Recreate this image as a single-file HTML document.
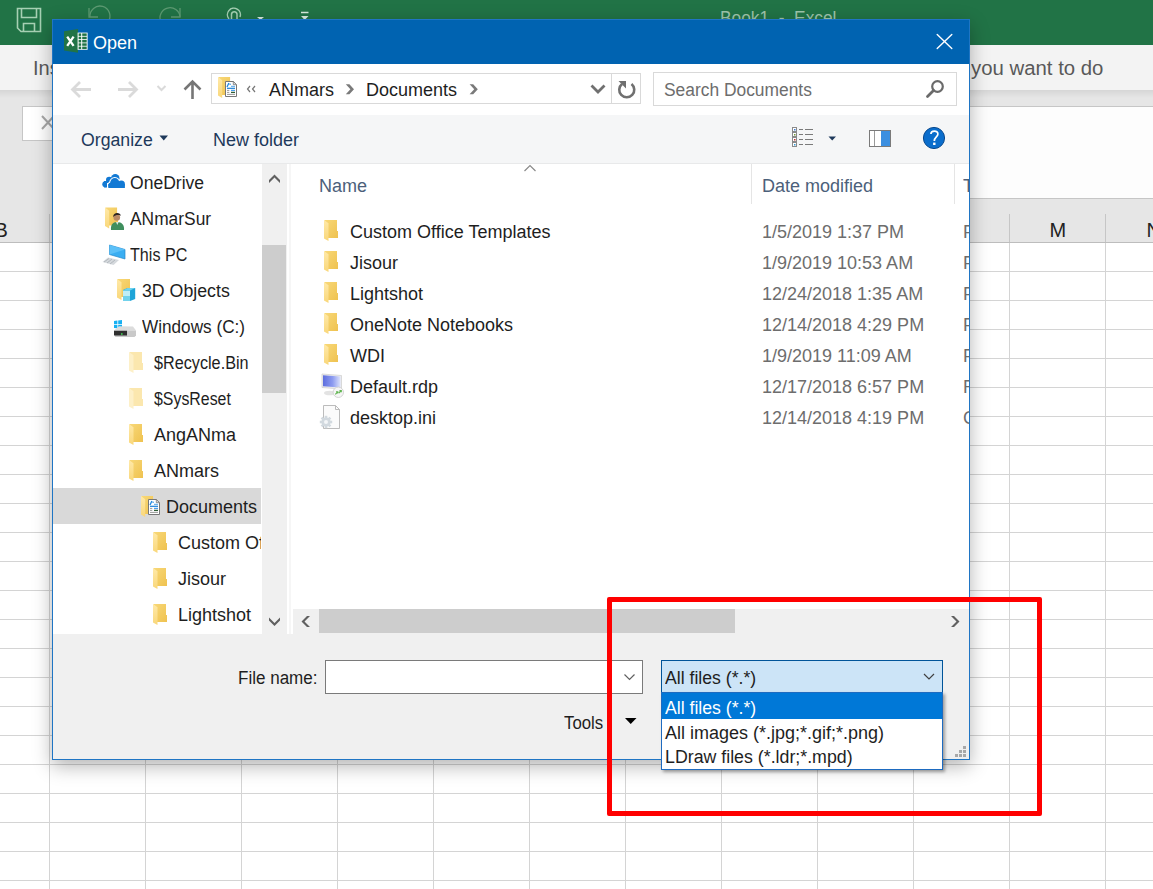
<!DOCTYPE html>
<html><head><meta charset="utf-8">
<style>
*{box-sizing:border-box;margin:0;padding:0}
html,body{width:1153px;height:889px;overflow:hidden;background:#fff}
body{position:relative;font-family:"Liberation Sans",sans-serif;font-size:18px;color:#1e1e1e}
.a{position:absolute}
.t{position:absolute;white-space:nowrap;line-height:1}
svg{position:absolute;overflow:visible}
</style></head><body>

<svg width="0" height="0" style="position:absolute">
<defs>
  <linearGradient id="fb" x1="0" y1="0" x2="1" y2="1"><stop offset="0" stop-color="#f8d878"/><stop offset="1" stop-color="#efc250"/></linearGradient>
  <linearGradient id="ff" x1="0" y1="0" x2="0" y2="1"><stop offset="0" stop-color="#ffe9a8"/><stop offset="1" stop-color="#f9d77a"/></linearGradient>
  
  
  
</defs></svg>
<!-- ============ EXCEL BACKGROUND ============ -->
<div class="a" style="left:0;top:0;width:1153px;height:45px;background:#217346"></div>
<!-- QAT icons -->
<svg style="left:0;top:0" width="320" height="45">
  <g fill="none" stroke="#a6d0b3" stroke-width="1.6">
    <path d="M17.5 8.5 H40.5 V31.5 H21 L17.5 28 Z"/>
    <path d="M21.5 8.5 V17.5 H36.5 V8.5"/>
    <path d="M23.5 31.5 V23.5 H34.5 V31.5"/>
  </g>
  <g fill="none" stroke="#5d9a72" stroke-width="1.3">
    <path d="M90 17 A10 10 0 1 1 108 22"/>
    <path d="M89 8 V17 H98"/>
    <path d="M180 17 A10 10 0 1 0 161 22"/>
    <path d="M180 8 V17 H171"/>
  </g>
  <g fill="none" stroke="#a6d0b3" stroke-width="1.5">
    <path d="M229 19 A6.5 6.5 0 1 1 240 17"/>
    <path d="M231.5 19 V14 A2.8 2.8 0 0 1 237 14 V19"/>
  </g>
  <path d="M257 17 H264 L260.5 20 Z" fill="#d9eadf"/>
  <path d="M301 12.5 H308.5" stroke="#d9eadf" stroke-width="1.5"/>
  <path d="M301 16 H308.5 L304.7 20 Z" fill="#d9eadf"/>
</svg>
<div class="t" style="left:720px;top:8.5px;font-size:18px;color:#9fc4ab;transform:scaleX(0.962);transform-origin:0 0">Book1&nbsp;&nbsp;-&nbsp;&nbsp;Excel</div>

<!-- tab row -->
<div class="a" style="left:0;top:45px;width:1153px;height:45px;background:#f3f3f3"></div>
<div class="t" style="left:33px;top:58px;font-size:20px;color:#595959">Insert</div>
<div class="t" style="left:971px;top:58px;font-size:20px;color:#595959;transform:scaleX(1.018);transform-origin:0 0">you want to do</div>
<!-- ribbon shadow / formula bar -->
<div class="a" style="left:0;top:90px;width:1153px;height:152px;background:#e6e6e6"></div>
<div class="a" style="left:0;top:90px;width:1153px;height:8px;background:linear-gradient(#d6d6d6,#e6e6e6)"></div>
<div class="a" style="left:22px;top:106px;width:40px;height:35px;background:#fff;border:1px solid #c6c6c6"></div>
<svg style="left:0;top:0" width="60" height="150"><path d="M42 116 L54 129 M54 116 L42 129" stroke="#a8a8a8" stroke-width="2"/></svg>
<div class="a" style="left:600px;top:106px;width:553px;height:93px;background:#fdfdfd;border-top:1px solid #c6c6c6;border-bottom:1px solid #c6c6c6"></div>
<!-- column header -->
<div class="a" style="left:0;top:242px;width:1153px;height:1px;background:#bdbdbd"></div>
<div class="a" style="left:49px;top:214px;width:1px;height:28px;background:#c6c6c6"></div>
<div class="a" style="left:1009px;top:214px;width:1px;height:28px;background:#c6c6c6"></div>
<div class="a" style="left:1105px;top:214px;width:1px;height:28px;background:#c6c6c6"></div>
<div class="t" style="left:-5.5px;top:220.3px;font-size:20px;color:#222">B</div>
<div class="t" style="left:1049.5px;top:220.3px;font-size:20px;color:#222">M</div>
<div class="t" style="left:1146.5px;top:220.3px;font-size:20px;color:#222">N</div>
<!-- grid -->
<div class="a" style="left:0;top:243px;width:1153px;height:646px;
background-image:linear-gradient(to right,#d4d4d4 1px,transparent 1px),linear-gradient(to bottom,#d4d4d4 1px,transparent 1px);
background-size:96px 29px,96px 29px;background-position:49px 0,0 28px"></div>

<!-- ============ DIALOG ============ -->
<div class="a" id="dlg" style="left:52px;top:19px;width:918px;height:741px;background:#fff;border:1px solid #1f75c4;box-shadow:0 6px 18px rgba(0,0,0,.3)"></div>
<!-- title bar -->
<div class="a" style="left:53px;top:20px;width:916px;height:44px;background:#0063b1"></div>
<svg style="left:0;top:0" width="120" height="64">
  <path d="M64 31.3 L78 29 V52.7 L64 50.5 Z" fill="#217346"/>
  <rect x="77.6" y="32.6" width="10" height="17.2" fill="#fff"/>
  <rect x="78.6" y="33.4" width="2.6" height="2.5" fill="#217346"/><rect x="82.2" y="33.4" width="4.5" height="2.5" fill="#217346"/><rect x="78.6" y="36.7" width="2.6" height="2.5" fill="#217346"/><rect x="82.2" y="36.7" width="4.5" height="2.5" fill="#217346"/><rect x="78.6" y="40.0" width="2.6" height="2.5" fill="#217346"/><rect x="82.2" y="40.0" width="4.5" height="2.5" fill="#217346"/><rect x="78.6" y="43.3" width="2.6" height="2.5" fill="#217346"/><rect x="82.2" y="43.3" width="4.5" height="2.5" fill="#217346"/><rect x="78.6" y="46.6" width="2.6" height="2.5" fill="#217346"/><rect x="82.2" y="46.6" width="4.5" height="2.5" fill="#217346"/>
  <path d="M67.2 36.6 L73.6 45.9 M73.6 36.6 L67.2 45.9" stroke="#fff" stroke-width="2.3"/>
</svg>
<div class="t" style="left:93px;top:34px;font-size:18px;color:#fff">Open</div>
<svg style="left:0;top:0" width="970" height="64"><path d="M937.2 34.5 L951.8 48.5 M951.8 34.5 L937.2 48.5" stroke="#fff" stroke-width="1.4" stroke-linecap="round"/></svg>


<!-- address row -->
<svg style="left:0;top:0" width="660" height="110">
  <g fill="none" stroke="#dadada" stroke-width="2.8">
    <path d="M73 89.5 H91 M80 82 L72.5 89.5 L80 97"/>
    <path d="M118 89.5 H136 M129 82 L136.5 89.5 L129 97"/>
  </g>
  <path d="M157.5 86 L161.5 90 L165.5 86" fill="none" stroke="#dadada" stroke-width="2"/>
  <path d="M192.5 99 V82 M184.5 89.5 L192.5 81.5 L200.5 89.5" fill="none" stroke="#767676" stroke-width="2.6"/>
</svg>
<div class="a" style="left:211px;top:73px;width:430px;height:31px;border:1px solid #d9d9d9;background:#fff"></div>
<div class="a" style="left:611px;top:74px;width:1px;height:29px;background:#d9d9d9"></div>
<svg style="left:0;top:0" width="660" height="110">
  <!-- documents icon -->
  <g transform="translate(218 77) scale(0.928571 1)"><path d="M0.5 0 H13 V11 H14 V18 H0.5 Z" fill="url(#fb)"/>
    <path d="M0 0 L4.5 3.2 V21 L0 18.5 Z" fill="url(#ff)"/></g>
  <g transform="translate(225 81) scale(1 1)"><path d="M0.5 0.5 H8.3 L11.5 3.7 V15.5 H0.5 Z" fill="#fff" stroke="#777" stroke-width="1"/>
    <path d="M8.3 0.5 V3.7 H11.5 Z" fill="#e6e6e6" stroke="#777" stroke-width="0.8"/>
    <path d="M2 6 L3.9 2" stroke="#1e88e0" stroke-width="1.3"/>
    <circle cx="5.1" cy="3.3" r="0.7" fill="#1e88e0"/>
    <path d="M6 5.3 H10" stroke="#4fa3e8" stroke-width="1"/>
    <path d="M2 7.3 H10" stroke="#1a7fd6" stroke-width="1.2"/>
    <path d="M2 9.4 H4.3 M2 11.4 H4.3 M2 13.4 H10" stroke="#9a9a9a" stroke-width="1"/>
    <path d="M6 9.4 H10" stroke="#4a9ef0" stroke-width="1.2"/>
    <path d="M6 11.4 H10" stroke="#2f5e36" stroke-width="1.3"/></g>
  <path d="M250 86 L247.5 89 L250 92 M255 86 L252.5 89 L255 92" fill="none" stroke="#777" stroke-width="1.2"/>
  <path d="M345.8 84.3 H349.4 L354 89.3 L349.4 94.3 H345.8 L350.4 89.3 Z" fill="#7a7a7a"/>
  <path d="M469.6 84.3 H473.2 L477.8 89.3 L473.2 94.3 H469.6 L474.2 89.3 Z" fill="#7a7a7a"/>
  <path d="M591.5 85.5 L598 92 L604.5 85.5" fill="none" stroke="#707070" stroke-width="2.8"/>
  <path d="M622 84 A7.5 7.5 0 1 0 631.5 84" fill="none" stroke="#707070" stroke-width="2.6"/>
  <path d="M618.5 81 H626 V88.5 Z" fill="#707070"/>
</svg>
<div class="t" style="left:269px;top:80.5px;color:#1e1e1e">ANmars</div>
<div class="t" style="left:366px;top:80.5px;color:#1e1e1e">Documents</div>
<!-- search -->
<div class="a" style="left:653px;top:72px;width:304px;height:34px;border:1px solid #d9d9d9;background:#fff"></div>
<div class="t" style="left:664px;top:81px;color:#6d6d6d;transform:scaleX(0.966);transform-origin:0 0">Search Documents</div>
<svg style="left:0;top:0" width="970" height="110">
  <circle cx="937.5" cy="86.5" r="5.3" fill="none" stroke="#6a6a6a" stroke-width="2.2"/>
  <path d="M933.5 90.5 L927.5 96.5" stroke="#6a6a6a" stroke-width="2.8" stroke-linecap="round"/>
</svg>

<!-- toolbar -->
<div class="a" style="left:53px;top:115px;width:916px;height:49px;background:#f5f6f7;border-bottom:1px solid #e8e9ea"></div>
<div class="t" style="left:81px;top:131px;color:#1e395b;transform:scaleX(0.982);transform-origin:0 0">Organize</div>
<svg style="left:0;top:0" width="970" height="165">
  <path d="M159.5 135.5 H168 L163.75 140.5 Z" fill="#1e395b"/>
  <!-- view icon -->
  <g fill="#fff" stroke="#8a8a8a" stroke-width="1">
    <rect x="792.5" y="127.5" width="4" height="4"/><rect x="792.5" y="132.5" width="4" height="4"/>
    <rect x="792.5" y="137.5" width="4" height="4"/><rect x="792.5" y="142.5" width="4" height="4"/>
  </g>
  <rect x="794" y="129" width="1.5" height="1.5" fill="#3a7bd5"/>
  <rect x="794" y="134" width="1.5" height="1.5" fill="#7a9a3a"/>
  <rect x="794" y="139" width="1.5" height="1.5" fill="#c03030"/>
  <rect x="794" y="144" width="1.5" height="1.5" fill="#3a9ad5"/>
  <path d="M799 129.5 H803 M805 129.5 H813 M799 134.5 H803 M805 134.5 H813 M799 139.5 H803 M805 139.5 H813 M799 144.5 H803 M805 144.5 H813" stroke="#7a7a7a" stroke-width="1"/>
  <path d="M828.5 136.5 H836 L832.2 140.5 Z" fill="#1e395b"/>
  <!-- preview pane -->
  <rect x="869.5" y="130.5" width="21" height="16" fill="#fff" stroke="#7a7a7a" stroke-width="1"/>
  <path d="M874.5 131 V146" stroke="#9a9a9a" stroke-width="1"/>
  <rect x="881" y="131" width="9" height="15" fill="#3c8fe0"/>
  <!-- help -->
  <circle cx="934" cy="138" r="10.6" fill="#0a6dcc" stroke="#0a4a8e" stroke-width="1"/>
  <path d="M930.9 134 C930.9 130.3 937.9 130 937.9 134 C937.9 136.8 934.3 137 934.3 141" fill="none" stroke="#fff" stroke-width="1.7"/>
  <rect x="933.1" y="142.6" width="2.4" height="2.4" fill="#fff"/>
</svg>
<div class="t" style="left:213px;top:131px;color:#1e395b">New folder</div>

<!-- nav pane -->
<div class="a" style="left:262px;top:164px;width:25px;height:470px;background:#f0f0f0"></div>
<div class="a" style="left:262px;top:245px;width:24px;height:148px;background:#cdcdcd"></div>
<div class="a" style="left:289px;top:164px;width:2px;height:470px;background:#f6f6f6"></div>
<svg style="left:0;top:0" width="300" height="640">
  <path d="M269 180 L274.5 174.5 L280 180 V183 L274.5 177.5 L269 183 Z" fill="#606060"/>
  <path d="M269 617.5 L274.5 623 L280 617.5 V620.5 L274.5 626 L269 620.5 Z" fill="#606060"/>
</svg>
<div class="a" style="left:53px;top:488px;width:208px;height:36px;background:#d9d9d9"></div>
<svg style="left:0;top:0" width="262" height="634">
  <!-- OneDrive -->
  <g fill="#1279d4">
    <circle cx="105.3" cy="184.3" r="3"/><circle cx="109.2" cy="180" r="3.2"/><circle cx="115.3" cy="178.2" r="4.2"/>
    <rect x="104" y="181" width="10" height="6.5"/>
  </g>
  <g fill="#fff">
    <circle cx="114.8" cy="182.7" r="5.6"/><circle cx="121.3" cy="184" r="4.6"/><circle cx="111.2" cy="185.2" r="3.8"/>
    <rect x="107" y="183" width="19.5" height="6"/>
  </g>
  <g fill="#1279d4">
    <circle cx="114.8" cy="182.7" r="4.6"/><circle cx="121.3" cy="184" r="3.6"/><circle cx="111.2" cy="185.2" r="2.8"/>
    <rect x="108.3" y="184" width="16.6" height="4"/>
  </g>
  <!-- ANmarSur user folder -->
  <g transform="translate(105 207.5) scale(0.928571 1)"><path d="M0.5 0 H13 V11 H14 V18 H0.5 Z" fill="url(#fb)"/>
    <path d="M0 0 L4.5 3.2 V21 L0 18.5 Z" fill="url(#ff)"/></g>
  <path d="M111 230 C110.5 225 112.5 222 117 222 C122 222 124.5 225 124 230 Z" fill="#3f8f5e"/>
  <path d="M116 222 L117.3 225 L118.6 222 Z" fill="#dfe8e2"/>
  <circle cx="116.8" cy="217.5" r="3.3" fill="#b98a66"/>
  <path d="M113.3 217 C112.8 212.5 120.5 211.5 120.8 216 C119.5 214.5 115.5 214.5 113.3 217Z" fill="#2e2622"/>
  <!-- This PC -->
  <path d="M109.5 245 L125 249.5 V259 L109.5 254.5 Z" fill="#3aaef2" stroke="#2a88c8" stroke-width="0.7"/>
  <path d="M109.5 245 L125 249.5 L109.5 254.5 Z" fill="#5cc0f8"/>
  <path d="M102.5 262 L108 257.5 L119 260 L113.5 265 Z" fill="#d5d9dd"/>
  <path d="M104 262 L109 258.5 M107 263 L112 259 M110 264 L115 260" stroke="#a8aeb4" stroke-width="0.8"/>
  <!-- 3D Objects -->
  <g transform="translate(117 279) scale(1 1)"><path d="M0.5 0 H13 V11 H14 V18 H0.5 Z" fill="url(#fb)"/>
    <path d="M0 0 L4.5 3.2 V21 L0 18.5 Z" fill="url(#ff)"/></g>
  <path d="M123 290 L127.5 288 H135.2 V299 L130 301 H123 Z" fill="#1ea4d8"/>
  <path d="M123 290.5 L130 290.5 V301 H123 Z" fill="#bfeef7"/>
  <path d="M123 290.5 L127.5 288 H135.2 L130 290.5 Z" fill="#6fd3ee"/>
  <path d="M123 296 H130 V301 H123 Z" fill="#3fc0e4" opacity="0.6"/>
  <!-- Windows drive -->
  <g fill="#18b0f2"><path d="M114 321 L117.4 320.6 V324 H114 Z"/><path d="M118.2 320.5 L122 320 V324 H118.2 Z"/><path d="M114 324.8 H117.4 V328.3 L114 328 Z"/><path d="M118.2 324.8 H122 V328.8 L118.2 328.4 Z"/></g>
  <path d="M114 330.5 L119 326.3 L133 326.6 L136 330.5 Z" fill="#dcdcdc"/>
  <path d="M114 330.5 H136 V335.5 L134.5 337 H115.5 L114 335.5 Z" fill="#c9c9c9"/>
  <path d="M114 330.8 H127 V335.6 H114.8 L114 335 Z" fill="#2f2f2f"/>
  <rect x="121" y="333.2" width="1.6" height="1.6" fill="#3fd24f"/>
  <g transform="translate(129 352) scale(1 1)"><path d="M0.5 0 H13 V11 H14 V18 H0.5 Z" fill="#fbe7ae"/>
    <path d="M0 0 L4.5 3.2 V21 L0 18.5 Z" fill="#fdf0c8"/></g>
  <g transform="translate(129 388) scale(1 1)"><path d="M0.5 0 H13 V11 H14 V18 H0.5 Z" fill="#fbe7ae"/>
    <path d="M0 0 L4.5 3.2 V21 L0 18.5 Z" fill="#fdf0c8"/></g>
  <g transform="translate(129 424) scale(1 1)"><path d="M0.5 0 H13 V11 H14 V18 H0.5 Z" fill="url(#fb)"/>
    <path d="M0 0 L4.5 3.2 V21 L0 18.5 Z" fill="url(#ff)"/></g>
  <g transform="translate(129 460) scale(1 1)"><path d="M0.5 0 H13 V11 H14 V18 H0.5 Z" fill="url(#fb)"/>
    <path d="M0 0 L4.5 3.2 V21 L0 18.5 Z" fill="url(#ff)"/></g>
  <!-- Documents -->
  <g transform="translate(141 496) scale(0.928571 1)"><path d="M0.5 0 H13 V11 H14 V18 H0.5 Z" fill="url(#fb)"/>
    <path d="M0 0 L4.5 3.2 V21 L0 18.5 Z" fill="url(#ff)"/></g>
  <g transform="translate(148 499) scale(1 1)"><path d="M0.5 0.5 H8.3 L11.5 3.7 V15.5 H0.5 Z" fill="#fff" stroke="#777" stroke-width="1"/>
    <path d="M8.3 0.5 V3.7 H11.5 Z" fill="#e6e6e6" stroke="#777" stroke-width="0.8"/>
    <path d="M2 6 L3.9 2" stroke="#1e88e0" stroke-width="1.3"/>
    <circle cx="5.1" cy="3.3" r="0.7" fill="#1e88e0"/>
    <path d="M6 5.3 H10" stroke="#4fa3e8" stroke-width="1"/>
    <path d="M2 7.3 H10" stroke="#1a7fd6" stroke-width="1.2"/>
    <path d="M2 9.4 H4.3 M2 11.4 H4.3 M2 13.4 H10" stroke="#9a9a9a" stroke-width="1"/>
    <path d="M6 9.4 H10" stroke="#4a9ef0" stroke-width="1.2"/>
    <path d="M6 11.4 H10" stroke="#2f5e36" stroke-width="1.3"/></g>
  <g transform="translate(153 532) scale(1 1)"><path d="M0.5 0 H13 V11 H14 V18 H0.5 Z" fill="url(#fb)"/>
    <path d="M0 0 L4.5 3.2 V21 L0 18.5 Z" fill="url(#ff)"/></g>
  <g transform="translate(153 568) scale(1 1)"><path d="M0.5 0 H13 V11 H14 V18 H0.5 Z" fill="url(#fb)"/>
    <path d="M0 0 L4.5 3.2 V21 L0 18.5 Z" fill="url(#ff)"/></g>
  <g transform="translate(153 604) scale(1 1)"><path d="M0.5 0 H13 V11 H14 V18 H0.5 Z" fill="url(#fb)"/>
    <path d="M0 0 L4.5 3.2 V21 L0 18.5 Z" fill="url(#ff)"/></g>
</svg>
<div class="a" style="left:53px;top:164px;width:208px;height:470px;overflow:hidden">
<div class="t" style="left:77px;top:10px;transform:scaleX(0.975);transform-origin:0 0">OneDrive</div>
<div class="t" style="left:77px;top:46px;transform:scaleX(0.965);transform-origin:0 0">ANmarSur</div>
<div class="t" style="left:77px;top:82px;transform:scaleX(0.895);transform-origin:0 0">This PC</div>
<div class="t" style="left:89px;top:118px;transform:scaleX(0.986);transform-origin:0 0">3D Objects</div>
<div class="t" style="left:89px;top:154px;transform:scaleX(0.954);transform-origin:0 0">Windows (C:)</div>
<div class="t" style="left:101px;top:190px;transform:scaleX(0.9);transform-origin:0 0">$Recycle.Bin</div>
<div class="t" style="left:101px;top:226px;transform:scaleX(0.883);transform-origin:0 0">$SysReset</div>
<div class="t" style="left:101px;top:262px">AngANma</div>
<div class="t" style="left:101px;top:298px">ANmars</div>
<div class="t" style="left:113px;top:334px">Documents</div>
<div class="t" style="left:125px;top:370px">Custom Office Templates</div>
<div class="t" style="left:125px;top:406px">Jisour</div>
<div class="t" style="left:125px;top:442px">Lightshot</div>
</div>


<!-- file list header -->
<div class="t" style="left:319px;top:177px;color:#4c607a">Name</div>
<svg style="left:0;top:0" width="970" height="210">
  <path d="M524.5 171 L530 165.5 L535.5 171" fill="none" stroke="#8a8a8a" stroke-width="1.2"/>
</svg>
<div class="a" style="left:751px;top:164px;width:1px;height:40px;background:#e5e5e5"></div>
<div class="t" style="left:762px;top:177px;color:#4c607a">Date modified</div>
<div class="a" style="left:954px;top:164px;width:1px;height:40px;background:#e5e5e5"></div>
<svg style="left:0;top:0" width="345" height="440">
  <g transform="translate(324 220) scale(1 1)"><path d="M0.5 0 H13 V11 H14 V18 H0.5 Z" fill="url(#fb)"/>
    <path d="M0 0 L4.5 3.2 V21 L0 18.5 Z" fill="url(#ff)"/></g>
  <g transform="translate(324 251) scale(1 1)"><path d="M0.5 0 H13 V11 H14 V18 H0.5 Z" fill="url(#fb)"/>
    <path d="M0 0 L4.5 3.2 V21 L0 18.5 Z" fill="url(#ff)"/></g>
  <g transform="translate(324 282) scale(1 1)"><path d="M0.5 0 H13 V11 H14 V18 H0.5 Z" fill="url(#fb)"/>
    <path d="M0 0 L4.5 3.2 V21 L0 18.5 Z" fill="url(#ff)"/></g>
  <g transform="translate(324 313) scale(1 1)"><path d="M0.5 0 H13 V11 H14 V18 H0.5 Z" fill="url(#fb)"/>
    <path d="M0 0 L4.5 3.2 V21 L0 18.5 Z" fill="url(#ff)"/></g>
  <g transform="translate(324 344) scale(1 1)"><path d="M0.5 0 H13 V11 H14 V18 H0.5 Z" fill="url(#fb)"/>
    <path d="M0 0 L4.5 3.2 V21 L0 18.5 Z" fill="url(#ff)"/></g>
  <!-- rdp -->
  <defs><linearGradient id="scr" x1="0" y1="0" x2="1" y2="0"><stop offset="0" stop-color="#5d6ede"/><stop offset="0.55" stop-color="#8e9cf0"/><stop offset="1" stop-color="#dde3fb"/></linearGradient></defs>
  <path d="M322 374 L341.5 375.5 V389 L322 387.5 Z" fill="#ececec" stroke="#d2d2d2" stroke-width="0.8"/>
  <path d="M323 375.2 L340.5 376.5 V387.5 L323 386.2 Z" fill="url(#scr)"/>
  <ellipse cx="329.5" cy="393" rx="5.5" ry="2.3" fill="#e3e3e3"/>
  <circle cx="338.3" cy="392.3" r="5.2" fill="#f6f6f6" stroke="#d0d0d0" stroke-width="0.9"/>
  <path d="M335.3 394.3 L337.8 391.8 M336 391.8 H337.8 V393.6 M338.8 393 L341.3 390.5 M339.5 390.5 H341.3 V392.3" fill="none" stroke="#5fb54f" stroke-width="1.1"/>
  <!-- ini -->
  <path d="M323.5 405.5 H335.5 L339.5 409.5 V428.5 H323.5 Z" fill="#fbfbfb" stroke="#b4b4b4" stroke-width="0.9"/>
  <path d="M335.5 405.5 V409.5 H339.5" fill="none" stroke="#b4b4b4" stroke-width="0.9"/>
  <g transform="translate(326,422)">
    <circle r="4.6" fill="#d2d9df"/>
    <g fill="#d2d9df"><rect x="-1.3" y="-6.2" width="2.6" height="12.4"/><rect x="-6.2" y="-1.3" width="12.4" height="2.6"/><rect x="-1.3" y="-6.2" width="2.6" height="12.4" transform="rotate(45)"/><rect x="-1.3" y="-6.2" width="2.6" height="12.4" transform="rotate(-45)"/></g>
    <circle r="2" fill="#f4f6f8"/>
  </g>
</svg>
<div class="t" style="left:350px;top:223px">Custom Office Templates</div>
<div class="t" style="left:350px;top:254px">Jisour</div>
<div class="t" style="left:350px;top:285px">Lightshot</div>
<div class="t" style="left:350px;top:316px">OneNote Notebooks</div>
<div class="t" style="left:350px;top:347px">WDI</div>
<div class="t" style="left:350px;top:378px">Default.rdp</div>
<div class="t" style="left:350px;top:409px">desktop.ini</div>
<div class="t" style="left:762px;top:223px;color:#6d6d6d">1/5/2019 1:37 PM</div>
<div class="t" style="left:762px;top:254px;color:#6d6d6d">1/9/2019 10:53 AM</div>
<div class="t" style="left:762px;top:285px;color:#6d6d6d">12/24/2018 1:35 AM</div>
<div class="t" style="left:762px;top:316px;color:#6d6d6d">12/14/2018 4:29 PM</div>
<div class="t" style="left:762px;top:347px;color:#6d6d6d">1/9/2019 11:09 AM</div>
<div class="t" style="left:762px;top:378px;color:#6d6d6d">12/17/2018 6:57 PM</div>
<div class="t" style="left:762px;top:409px;color:#6d6d6d">12/14/2018 4:19 PM</div>
<div class="a" style="left:963px;top:164px;width:6px;height:270px;overflow:hidden">
<div class="t" style="left:0;top:13px;color:#4c607a">Type</div>
<div class="t" style="left:0;top:59px;color:#6d6d6d">F</div>
<div class="t" style="left:0;top:90px;color:#6d6d6d">F</div>
<div class="t" style="left:0;top:121px;color:#6d6d6d">F</div>
<div class="t" style="left:0;top:152px;color:#6d6d6d">F</div>
<div class="t" style="left:0;top:183px;color:#6d6d6d">F</div>
<div class="t" style="left:0;top:214px;color:#6d6d6d">R</div>
<div class="t" style="left:0;top:245px;color:#6d6d6d">C</div>
</div>


<!-- h scrollbar -->
<div class="a" style="left:293px;top:609px;width:676px;height:25px;background:#f0f0f0"></div>
<div class="a" style="left:319px;top:609px;width:416px;height:24px;background:#cdcdcd"></div>
<svg style="left:0;top:0" width="970" height="640">
  <path d="M307 616 H310 L304.5 621.5 L310 627 H307 L301.5 621.5 Z" fill="#606060"/>
  <path d="M951 616 H954 L959.5 621.5 L954 627 H951 L956.5 621.5 Z" fill="#606060"/>
</svg>

<!-- footer -->
<div class="a" style="left:53px;top:634px;width:916px;height:125px;background:#f0f0f0"></div>
<div class="t" style="left:238px;top:669px;color:#1e1e1e;transform:scaleX(0.946);transform-origin:0 0">File name:</div>
<div class="a" style="left:325px;top:660px;width:318px;height:34px;border:1px solid #7a7a7a;background:#fff"></div>
<svg style="left:0;top:0" width="970" height="760">
  <path d="M624.5 674.5 L629.5 679.5 L634.5 674.5" fill="none" stroke="#606060" stroke-width="1.2"/>
  <path d="M625 718 H636.5 L630.7 724 Z" fill="#000"/>
  <g fill="#a8a8a8">
    <rect x="963" y="746" width="3" height="3"/>
    <rect x="959" y="750" width="3" height="3"/><rect x="963" y="750" width="3" height="3"/>
    <rect x="955" y="754" width="3" height="3"/><rect x="959" y="754" width="3" height="3"/><rect x="963" y="754" width="3" height="3"/>
  </g>
</svg>
<div class="t" style="left:564px;top:714px;color:#1e1e1e;transform:scaleX(0.933);transform-origin:0 0">Tools</div>
<!-- filter combo -->
<div class="a" style="left:661px;top:660px;width:282px;height:33px;border:1px solid #005499;background:#cce4f7"></div>
<div class="t" style="left:665px;top:669px;color:#1e1e1e;transform:scaleX(0.98);transform-origin:0 0">All files (*.*)</div>
<svg style="left:0;top:0" width="970" height="700">
  <path d="M924 674 L929 679 L934 674" fill="none" stroke="#404040" stroke-width="1.2"/>
</svg>
<!-- dropdown list -->
<div class="a" style="left:661px;top:692px;width:282px;height:78px;border:1px solid #1e6bc0;background:#fff;box-shadow:2px 2px 3px rgba(0,0,0,.35)"></div>
<div class="a" style="left:662px;top:693px;width:280px;height:26px;background:#0078d7"></div>
<div class="t" style="left:665px;top:699px;color:#fff;transform:scaleX(0.98);transform-origin:0 0">All files (*.*)</div>
<div class="t" style="left:665px;top:724px;color:#1e1e1e">All images (*.jpg;*.gif;*.png)</div>
<div class="t" style="left:665px;top:748px;color:#1e1e1e;transform:scaleX(0.987);transform-origin:0 0">LDraw files (*.ldr;*.mpd)</div>

<!-- red rectangle -->
<div class="a" style="left:607px;top:597px;width:435px;height:219px;border:5px solid #f00;border-radius:2px"></div>

</body></html>
